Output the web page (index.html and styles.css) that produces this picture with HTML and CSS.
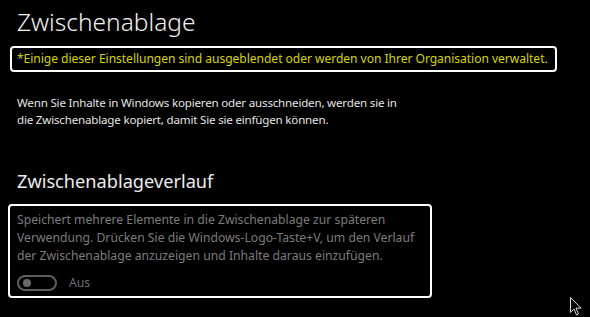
FILE: index.html
```html
<!DOCTYPE html>
<html lang="de">
<head>
	<meta charset="UTF-8">
	<title>Zwischenablage</title>
	<link rel="stylesheet" href="styles.css">
</head>
<body>
	<div class="page">
		<h1 class="title">Zwischenablage</h1>
		<div class="notice">*Einige dieser Einstellungen sind ausgeblendet oder werden von Ihrer Organisation verwaltet.</div>
		<p class="intro">Wenn Sie Inhalte in Windows kopieren oder ausschneiden, werden sie in<br>die Zwischenablage kopiert, damit Sie sie einfügen können.</p>

		<h2 class="subtitle">Zwischenablageverlauf</h2>
		<div class="group">
			<p class="desc">Speichert mehrere Elemente in die Zwischenablage zur späteren<br>Verwendung. Drücken Sie die Windows-Logo-Taste+V, um den Verlauf<br>der Zwischenablage anzuzeigen und Inhalte daraus einzufügen.</p>
			<div class="switch-row">
				<span class="switch"><span class="knob"></span></span>
				<span class="switch-label">Aus</span>
			</div>
		</div>
	</div>
	<svg class="cursor" width="12" height="19" viewBox="0 0 12 19">
		<path d="M0.5 0.5 L0.5 15.5 L4 12 L6.5 18 L8.5 17 L6 11.2 L11 11.2 Z" fill="#000" stroke="#d8d8d8" stroke-width="1"/>
	</svg>
</body>
</html>
```

FILE: styles.css
```css
body,h1,h2,p{margin: 0;padding: 0;}
html,body{background: #000;}
body{font-family: "Noto Sans", "Open Sans", sans-serif; color: #e8e8e8; overflow: hidden; height: 317px; position: relative; white-space: nowrap;}

.page{padding: 0 0 0 10px;}

.title{margin-left: 7px; padding-top: 7px; font-size: 24.5px; font-weight: 300; line-height: 30px; color: #f0f0f0;}

.notice{width: 533px; height: 22px; margin-top: 9px; padding: 0 5px; border: 2.5px solid #fff; border-radius: 4px; color: #d6d400; font-size: 12.1px; line-height: 22px; letter-spacing: -0.05px;}

.intro{margin: 22px 0 0 7px; font-size: 11.6px; line-height: 17px; letter-spacing: -0.2px; color: #e4e4e4;}

.subtitle{margin: 41px 0 0 7px; font-size: 18.2px; font-weight: 400; line-height: 24px; color: #ececec;}

.group{width: 413px; margin: 11px 0 0 -2px; padding: 4.5px 0 5.5px 7px; border: 2.5px solid #fff; border-radius: 4px;}
.desc{font-size: 12.2px; line-height: 18px; color: #7c7c7c;}

.switch-row{display: flex; align-items: center; gap: 12px; height: 16px; margin-top: 10px;}
.switch{display: flex; align-items: center; width: 36px; height: 12px; border: 2px solid #5e5e5e; border-radius: 8px;}
.knob{width: 8px; height: 8px; margin-left: 4px; border-radius: 50%; background: #6a6a6a;}
.switch-label{font-size: 12.2px; color: #6e6e6e;}

.cursor{position: absolute; left: 570px; top: 297px;}
```
